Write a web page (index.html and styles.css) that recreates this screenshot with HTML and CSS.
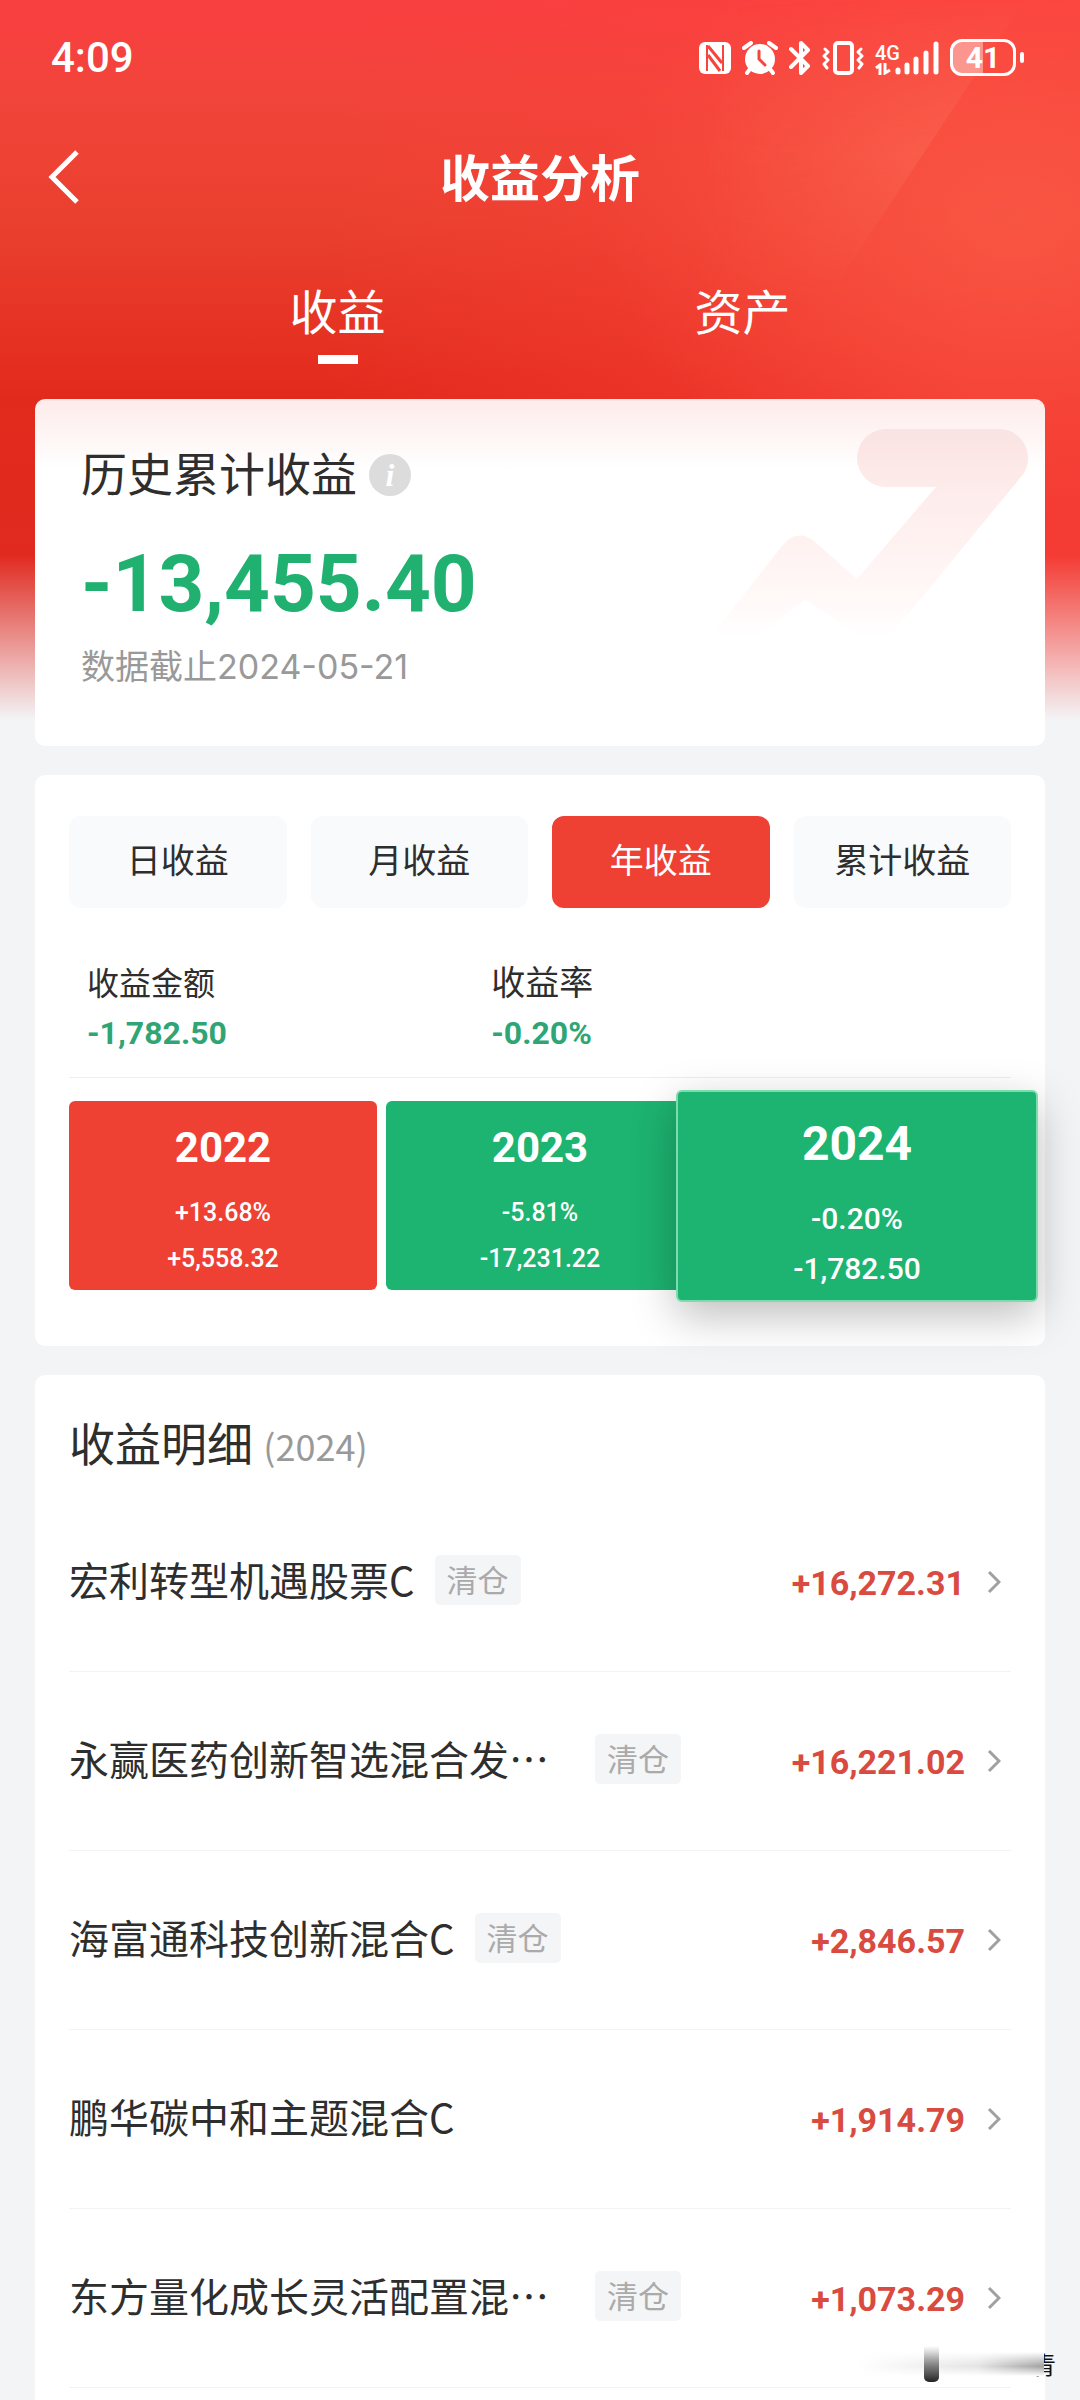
FILE: index.html
```
<!DOCTYPE html>
<html lang="zh-CN">
<head>
  <meta charset="utf-8">
  <meta name="viewport" content="width=device-width, initial-scale=1">
  <title>收益分析</title>
  <link rel="stylesheet" href="styles.css">
</head>
<body>
<div class="page">
  <!-- 背景光斜纹 -->
  <svg class="streak" viewBox="0 0 400 600" aria-hidden="true">
    <defs>
      <linearGradient id="beamA" x1="0" y1="0" x2="1" y2="0">
        <stop offset="0" stop-color="#ff9478" stop-opacity="0"/>
        <stop offset="1" stop-color="#ff9478" stop-opacity=".26"/>
      </linearGradient>
      <linearGradient id="beamFade" x1="0" y1="0" x2="0" y2="1">
        <stop offset="0" stop-color="#fff" stop-opacity="0"/>
        <stop offset=".5" stop-color="#fff"/>
        <stop offset="1" stop-color="#fff" stop-opacity="0"/>
      </linearGradient>
      <mask id="beamMask"><rect width="400" height="310" fill="url(#beamFade)"/></mask>
    </defs>
    <path d="M60 0 H345 L140 310 H0 Z" fill="url(#beamA)" mask="url(#beamMask)"/>
  </svg>

  <header class="header">
    <div class="status">
      <span class="clock">4:09</span>
      <div class="status-icons">
        <svg width="32" height="32" viewBox="0 0 32 32" aria-hidden="true">
          <rect width="32" height="32" rx="6" fill="#fff"/>
          <path d="M8 3 V29 M24 3 V29" stroke="#f6443f" stroke-width="2" fill="none"/>
          <path d="M9 4 L23 21 M9 13 L21 29" stroke="#f6443f" stroke-width="3" fill="none"/>
        </svg>
        <svg width="36" height="34" viewBox="0 0 36 34" aria-hidden="true">
          <circle cx="18" cy="18" r="15" fill="#fff"/>
          <path d="M2 7 L9 2 M34 7 L27 2 M8 28 L5 32 M28 28 L31 32" stroke="#fff" stroke-width="4" stroke-linecap="round"/>
          <path d="M17 10 V18 L23 24" stroke="#f6443f" stroke-width="3" fill="none" stroke-linecap="round" stroke-linejoin="round"/>
        </svg>
        <svg width="22" height="36" viewBox="0 0 22 36" fill="none" stroke="#fff" stroke-width="4" stroke-linejoin="round" stroke-linecap="round" aria-hidden="true">
          <path d="M2 9 L19 26 L12 33 V3 L19 10 L2 27"/>
        </svg>
        <svg width="42" height="34" viewBox="0 0 42 34" fill="none" stroke="#fff" stroke-linejoin="round" stroke-linecap="round" aria-hidden="true">
          <rect x="13" y="2" width="17" height="30" rx="3" stroke-width="4"/>
          <path d="M3 8 L6 11 L2 15 L6 19 L2 23 L5 27 M39 8 L36 11 L40 15 L36 19 L40 23 L37 27" stroke-width="3"/>
        </svg>
        <div class="signal">
          <div class="net">
            <span class="net-name">4G</span>
            <svg width="16" height="12" viewBox="0 0 16 12" fill="none" stroke="#fff" stroke-width="3" aria-hidden="true">
              <path d="M1 5 L5 2 V12 M10 0 V10 L15 7"/>
            </svg>
          </div>
          <svg width="44" height="34" viewBox="0 0 44 34" stroke="#fff" stroke-width="5" stroke-linecap="round" aria-hidden="true">
            <path d="M3 29 V31 M12 24 V31 M21 18 V31 M31 12 V31 M41 3 V31"/>
          </svg>
        </div>
        <div class="battery"><span class="battery-body">41</span><i class="battery-nub"></i></div>
      </div>
    </div>

    <div class="titlebar">
      <button class="back" type="button" aria-label="返回">
        <svg width="32" height="54" viewBox="0 0 32 54" fill="none" stroke="#fff" stroke-width="5" aria-hidden="true">
          <path d="M29 2 L4 27 L29 52"/>
        </svg>
      </button>
      <h1 class="title">收益分析</h1>
    </div>

    <nav class="tabs">
      <button class="tab active" type="button">收益</button>
      <button class="tab" type="button">资产</button>
    </nav>
  </header>

  <main class="content">
    <!-- 累计收益 -->
    <section class="card total">
      <svg class="trend" width="345" height="250" viewBox="685 429 345 250" aria-hidden="true">
        <defs>
          <linearGradient id="trendFill" x1="0" y1="0" x2="0" y2="1">
            <stop offset="0" stop-color="#fae3e2"/>
            <stop offset=".25" stop-color="#fdeceb"/>
            <stop offset=".6" stop-color="#fff6f5"/>
            <stop offset=".85" stop-color="#fff"/>
          </linearGradient>
        </defs>
        <path fill="url(#trendFill)" d="M886 429 H1000 A29 29 0 0 1 1020 478 L895 630 Q880 648 860 636 L805 600 L705 676 L685 670 L782 546 Q796 528 814 541 L857 579 L936 487 H886 A29 29 0 0 1 886 429 Z"/>
      </svg>
      <div class="total-head">
        <h2 class="heading">历史累计收益</h2>
        <button class="info" type="button" aria-label="说明">i</button>
      </div>
      <p class="total-num">-13,455.40</p>
      <p class="total-date">数据截止2024-05-21</p>
    </section>

    <!-- 分周期收益 -->
    <section class="card period">
      <div class="period-tabs">
        <button class="period-tab" type="button">日收益</button>
        <button class="period-tab" type="button">月收益</button>
        <button class="period-tab active" type="button">年收益</button>
        <button class="period-tab" type="button">累计收益</button>
      </div>
      <dl class="stats">
        <div>
          <dt>收益金额</dt>
          <dd>-1,782.50</dd>
        </div>
        <div>
          <dt class="rate">收益率</dt>
          <dd>-0.20%</dd>
        </div>
      </dl>
      <div class="years">
        <button class="year up" type="button">
          <strong>2022</strong><span>+13.68%</span><span>+5,558.32</span>
        </button>
        <button class="year down" type="button">
          <strong>2023</strong><span>-5.81%</span><span>-17,231.22</span>
        </button>
        <button class="year down selected" type="button">
          <strong>2024</strong><span>-0.20%</span><span>-1,782.50</span>
        </button>
      </div>
    </section>

    <!-- 收益明细 -->
    <section class="card detail">
      <h2 class="heading">收益明细 <small>(2024)</small></h2>
      <ul class="funds">
        <li><a class="fund" href="#">
          <span class="name">宏利转型机遇股票C</span><span class="tag">清仓</span>
          <span class="amount">+16,272.31</span>
          <svg class="arrow" width="14" height="24" viewBox="0 0 14 24"><path d="M2 2 L12 12 L2 22"/></svg>
        </a></li>
        <li><a class="fund" href="#">
          <span class="name long">永赢医药创新智选混合发…</span><span class="tag">清仓</span>
          <span class="amount">+16,221.02</span>
          <svg class="arrow" width="14" height="24" viewBox="0 0 14 24"><path d="M2 2 L12 12 L2 22"/></svg>
        </a></li>
        <li><a class="fund" href="#">
          <span class="name">海富通科技创新混合C</span><span class="tag">清仓</span>
          <span class="amount">+2,846.57</span>
          <svg class="arrow" width="14" height="24" viewBox="0 0 14 24"><path d="M2 2 L12 12 L2 22"/></svg>
        </a></li>
        <li><a class="fund" href="#">
          <span class="name">鹏华碳中和主题混合C</span>
          <span class="amount">+1,914.79</span>
          <svg class="arrow" width="14" height="24" viewBox="0 0 14 24"><path d="M2 2 L12 12 L2 22"/></svg>
        </a></li>
        <li><a class="fund" href="#">
          <span class="name long">东方量化成长灵活配置混…</span><span class="tag">清仓</span>
          <span class="amount">+1,073.29</span>
          <svg class="arrow" width="14" height="24" viewBox="0 0 14 24"><path d="M2 2 L12 12 L2 22"/></svg>
        </a></li>
      </ul>
    </section>
  </main>

  <!-- 右下角水印 -->
  <div class="mark">
    <span class="mark-text">青</span>
    <i class="mark-smear"></i>
    <i class="mark-bar"></i>
  </div>
</div>
</body>
</html>
```
FILE: styles.css
```
* {
  box-sizing: border-box;
}

body {
  margin: 0;
  background: #f3f4f6;
  color: #2e2e2e;
  font-family: "Noto Sans CJK SC", sans-serif;
}

h1, h2, p, dl, dd, ul {
  margin: 0;
  padding: 0;
  font-weight: 400;
}

button {
  padding: 0;
  border: 0;
  background: none;
  color: inherit;
  font: inherit;
}

/* 顶部红色背景，向下渐隐 */
.page {
  position: relative;
  overflow: hidden;
  background:
    linear-gradient(rgba(243, 244, 246, 0) 555px, #f3f4f6 720px),
    radial-gradient(420px 300px at 94% 220px, rgba(250, 98, 74, .6), transparent),
    linear-gradient(90deg, transparent 30%, rgba(252, 66, 60, .7) 90%),
    linear-gradient(#f93f41 0, #f1443a 100px, #ea402f 220px, #e22a1c 400px, #e02a20 560px);
}

.streak {
  position: absolute;
  top: 0;
  right: 0;
  width: 400px;
  height: 600px;
}

.header {
  position: relative;
  color: #fff;
}

/* 状态栏 */
.status {
  display: flex;
  justify-content: space-between;
  align-items: center;
  height: 115px;
  padding: 0 56px 0 51px;
}

.clock {
  font-family: Roboto, sans-serif;
  font-size: 42px;
  font-weight: 500;
}

.status-icons {
  display: flex;
  align-items: center;
  gap: 11px;
}

.signal {
  display: flex;
  align-items: flex-end;
}

.net {
  display: flex;
  flex-direction: column;
  width: 20px;
}

.net-name {
  font: 500 20px/20px Roboto, sans-serif;
}

.battery {
  display: flex;
  align-items: center;
  gap: 4px;
}

.battery-body {
  width: 66px;
  height: 37px;
  border: 3px solid #fff;
  border-radius: 12px;
  background: linear-gradient(90deg, rgba(255, 255, 255, .4) 50%, transparent 50%);
  font: 700 30px/31px Roboto, sans-serif;
  text-align: center;
}

.battery-nub {
  width: 4px;
  height: 11px;
  border-radius: 2px;
  background: #fff;
}

/* 标题栏 */
.titlebar {
  display: grid;
  grid-template-columns: 1fr auto 1fr;
  align-items: center;
  height: 126px;
  padding: 0 48px 2px;
}

.back {
  display: flex;
  justify-self: start;
}

.title {
  padding-bottom: 4px;
  font-size: 50px;
  line-height: 60px;
  font-weight: 700;
}

.tabs {
  display: grid;
  grid-template-columns: 1fr 1fr;
  padding: 38px 12.5% 35px;
}

.tab {
  display: flex;
  flex-direction: column;
  align-items: center;
  font-size: 48px;
  line-height: 60px;
}

.tab::after {
  content: "";
  width: 40px;
  height: 9px;
  margin-top: 16px;
}

.tab.active::after {
  background: #fff;
}

/* 卡片 */
.content {
  position: relative;
  display: flex;
  flex-direction: column;
  gap: 29px;
  padding: 0 35px;
}

.card {
  position: relative;
  border-radius: 10px;
  background: #fff;
}

.heading {
  font-size: 46px;
  line-height: 60px;
}

.total {
  padding: 42px 46px 59px;
  background: linear-gradient(#fdebea, #fff 70px);
}

.trend {
  position: absolute;
  top: 30px;
  right: 15px;
}

.total-head {
  display: flex;
  align-items: center;
  gap: 12px;
}

.info {
  width: 42px;
  height: 42px;
  margin-top: 8px;
  border-radius: 50%;
  background: #dcdcdc;
  color: #fff;
  font: italic 700 32px/42px "Liberation Serif", serif;
}

.total-num {
  margin-top: 38px;
  color: #20b070;
  font: 700 80px/90px Roboto, sans-serif;
}

.total-date {
  margin-top: 18px;
  color: #999;
  font-family: Inter, "Noto Sans CJK SC", sans-serif;
  font-size: 34px;
  line-height: 40px;
}

/* 周期切换 */
.period {
  padding: 41px 34px 56px;
}

.period-tabs {
  display: grid;
  grid-template-columns: repeat(4, 1fr);
  gap: 24px;
}

.period-tab {
  height: 92px;
  padding-bottom: 8px;
  border-radius: 12px;
  background: #f9fafc;
  font-size: 34px;
}

.period-tab.active {
  background: #ef4034;
  color: #fff;
}

.stats {
  display: grid;
  grid-template-columns: 7fr 9fr;
  padding: 53px 0 24px 18px;
  border-bottom: 1px solid #eee;
}

.stats dt {
  font-size: 32px;
  line-height: 40px;
}

.stats .rate {
  font-size: 34px;
}

.stats dd {
  margin-top: 12px;
  color: #2fa575;
  font: 700 32px/40px Roboto, sans-serif;
}

/* 年度色块 */
.years {
  display: grid;
  grid-template-columns: repeat(3, 1fr);
  gap: 9px;
  margin-top: 23px;
}

.year {
  display: flex;
  flex-direction: column;
  align-items: center;
  padding: 22px 0 8px;
  border-radius: 6px;
  color: #fff;
  font: 500 25px/46px Roboto, sans-serif;
}

.year strong {
  margin-bottom: 17px;
  font-size: 42px;
  line-height: 50px;
}

.up {
  background: #ef4034;
}

.down {
  background: #1db370;
}

/* 当前年份放大，盖在相邻色块上 */
.year.selected {
  z-index: 1;
  margin: -11px -27px -12px;
  padding: 22px 0 6px;
  border: 2px solid #7bdcae;
  font-size: 30px;
  line-height: 50px;
  box-shadow: 0 14px 44px rgba(0, 0, 0, .26);
}

.year.selected strong {
  margin-bottom: 20px;
  font-size: 48px;
  line-height: 60px;
}

/* 明细列表 */
.detail {
  padding: 36px 34px 14px;
  border-radius: 10px 10px 0 0;
}

.heading small {
  color: #999;
  font-size: 36px;
}

.funds {
  margin-top: 18px;
  list-style: none;
}

.fund {
  display: flex;
  align-items: center;
  height: 179px;
  padding-right: 10px;
  border-bottom: 1px solid #f3f3f3;
  color: inherit;
  text-decoration: none;
}

.name {
  padding-bottom: 6px;
  font-size: 40px;
  line-height: 60px;
}

.name.long {
  width: 506px;
}

.tag {
  margin-left: 20px;
  margin-bottom: 4px;
  padding: 0 12px 2px;
  border-radius: 5px;
  background: #f4f5f7;
  color: #aaa;
  font-size: 31px;
  line-height: 48px;
}

.amount {
  margin-left: auto;
  padding-top: 2px;
  color: #d94a40;
  font: 700 34px/40px Roboto, sans-serif;
}

.arrow {
  margin-left: 22px;
  fill: none;
  stroke: #a0a0a0;
  stroke-width: 3;
}

/* 水印 */
.mark {
  position: absolute;
  right: 24px;
  bottom: 20px;
  width: 199px;
  height: 36px;
  text-align: right;
}

.mark-text {
  color: #111;
  font-size: 24px;
  line-height: 36px;
}

.mark-smear {
  position: absolute;
  top: 6px;
  right: 12px;
  left: 0;
  height: 24px;
  background:
    linear-gradient(90deg, #fff, rgba(255, 255, 255, .8) 65%, rgba(255, 255, 255, .3)),
    linear-gradient(#fff, #777 60%, #fff);
}

.mark-bar {
  position: absolute;
  top: 0;
  left: 67px;
  width: 15px;
  height: 36px;
  border-radius: 0 0 5px 5px;
  background: linear-gradient(transparent, #222);
}
```
